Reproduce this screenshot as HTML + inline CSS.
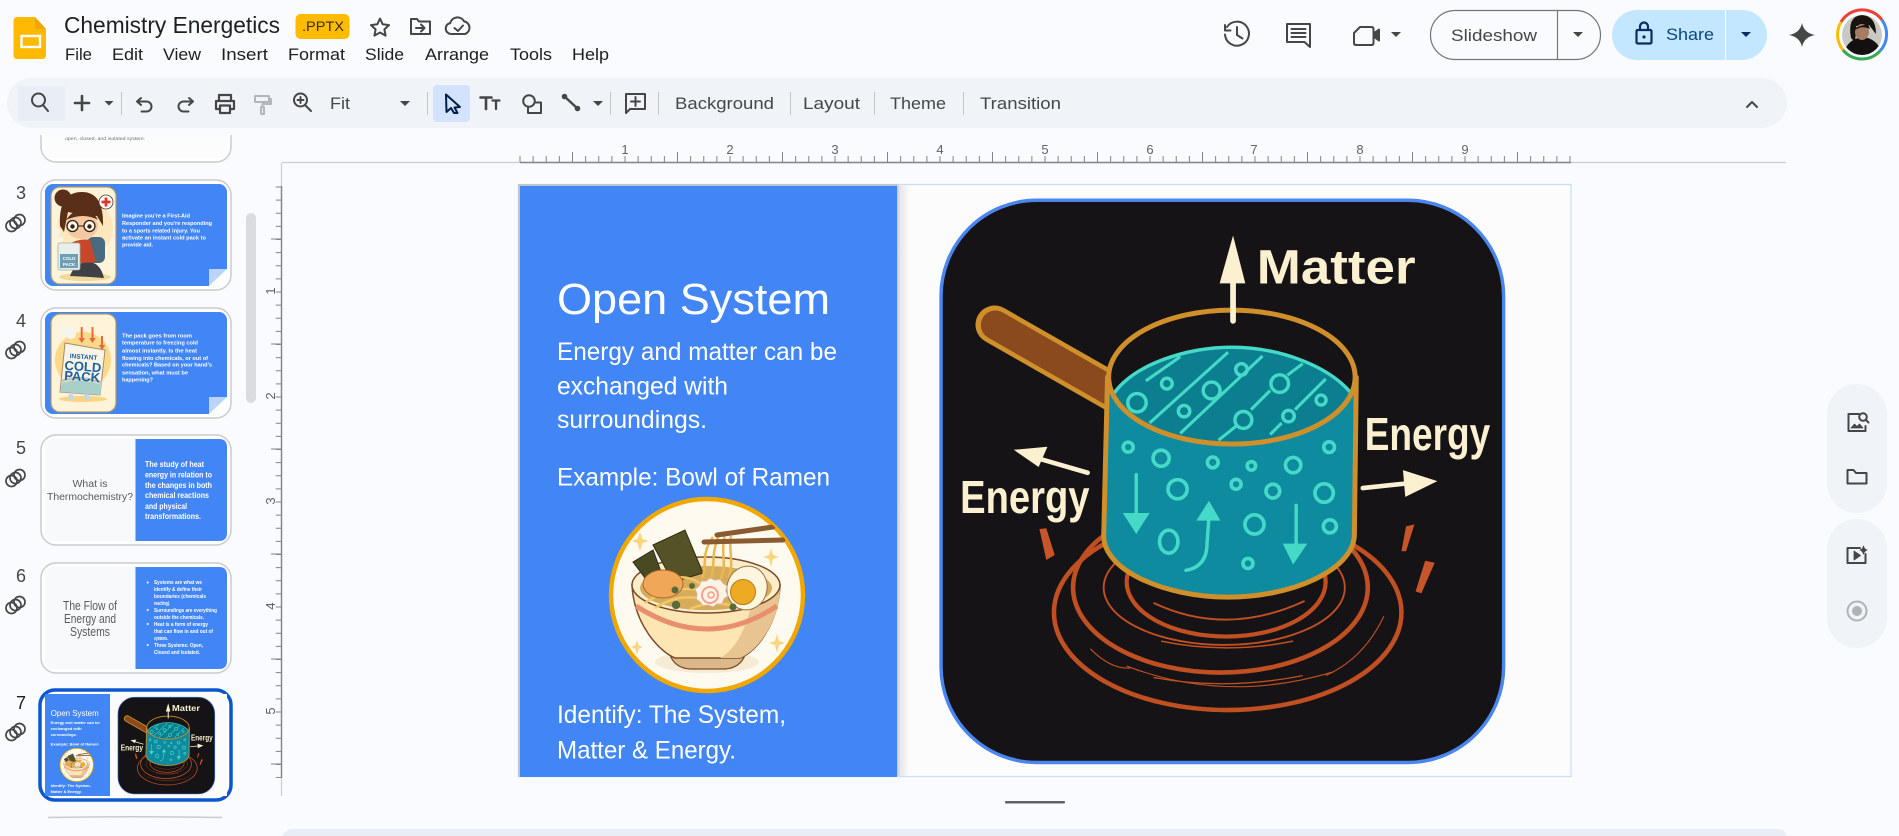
<!DOCTYPE html>
<html lang="en"><head><meta charset="utf-8"><title>Chemistry Energetics</title>
<style>
html,body{margin:0;padding:0;background:#f9fbfe;width:1899px;height:836px;overflow:hidden}
svg{display:block;font-family:"Liberation Sans",Arial,sans-serif}
.ui{fill:#1f1f1f}
.ic{fill:none;stroke:#444746;stroke-width:2;stroke-linecap:round;stroke-linejoin:round}
.car{fill:#444746}
.w{fill:#fff}
.b{fill:#fff;font-weight:700}
.n{fill:#444746;font-size:18px}
.rn{fill:#5f6368;font-size:13px;text-anchor:middle}
.card{fill:#fff;stroke:#c9cbce;stroke-width:1.5}
.bub{fill:none;stroke:#45d9c8}
</style></head>
<body>
<svg width="1899" height="836" viewBox="0 0 1899 836" xmlns="http://www.w3.org/2000/svg">
<defs>
<clipPath id="thumbClip"><rect x="0" y="135" width="240" height="701"/></clipPath>
<clipPath id="potRim"><ellipse cx="815" cy="515" rx="320" ry="173"/></clipPath>
<clipPath id="ramenC"><circle cx="707" cy="595" r="96"/></clipPath>
<clipPath id="img3"><rect x="51" y="187" width="65" height="97" rx="9"/></clipPath>
<clipPath id="img4"><rect x="51" y="314" width="65" height="98" rx="9"/></clipPath>
<clipPath id="avC"><circle cx="1862" cy="35" r="20"/></clipPath>
<linearGradient id="sh" x1="0" x2="1" y1="0" y2="0"><stop offset="0" stop-color="#c3c6ca"/><stop offset=".25" stop-color="#e4e5e7"/><stop offset="1" stop-color="#fbfbfb"/></linearGradient>

<g id="pot">
<rect x="55" y="53" width="1470" height="1469" rx="250" fill="#151315" stroke="#4a86ee" stroke-width="9"/>
<g fill="none" stroke="#c04f22">
<ellipse cx="804" cy="1130" rx="454" ry="255" stroke-width="12"/>
<ellipse cx="785" cy="1065" rx="385" ry="222" stroke-width="12"/>
<ellipse cx="795" cy="1065" rx="315" ry="150" stroke-width="5"/>
<ellipse cx="800" cy="1050" rx="260" ry="143" stroke-width="11"/>
<path d="M610 1105Q800 1195 1005 1100" stroke-width="5"/>
<path d="M630 1205Q800 1240 975 1205" stroke-width="4"/>
<path d="M610 1300Q800 1335 1000 1295" stroke-width="3.500"/>
<path d="M540 1270Q800 1370 1080 1285" stroke-width="3"/>
<path d="M445 1225Q500 1280 550 1275" stroke-width="3"/>
<path d="M1060 1295Q1160 1250 1212 1140" stroke-width="3"/>
</g>
<path d="M312 912L330 910L352 980L330 993Z M1270 905L1292 900L1270 970L1258 970Z M1320 995L1345 1000L1310 1080L1295 1075Z" fill="#c8552a"/>
<line x1="195" y1="378" x2="505" y2="555" stroke="#cf8f2b" stroke-width="100" stroke-linecap="round"/>
<line x1="197" y1="379" x2="505" y2="555" stroke="#8a4a1e" stroke-width="76" stroke-linecap="round"/>
<path d="M490 515L480 930C480 1020 640 1090 805 1090C970 1090 1130 1020 1135 930L1140 515Z" fill="#0f8ba0" stroke="#cf8f2b" stroke-width="13" stroke-linejoin="round"/>
<ellipse cx="815" cy="515" rx="322" ry="175" fill="#151315"/>
<g clip-path="url(#potRim)">
<path d="M505 560C560 480 700 437 815 437C930 437 1060 480 1125 555L1125 700L505 700Z" fill="#0b7f8f" stroke="#45d9c8" stroke-width="9"/>
<path d="M590 525L680 462M600 635L805 450M680 662L895 460M780 680L830 640M960 510L1000 480M865 600L915 550M980 600L1060 520M915 665L945 635" stroke="#45d9c8" stroke-width="8" fill="none"/>
<g class="bub" stroke-width="9"><circle cx="567" cy="582" r="24"/><circle cx="645" cy="532" r="14"/><circle cx="762" cy="550" r="22"/><circle cx="840" cy="495" r="15"/><circle cx="690" cy="604" r="15"/><circle cx="940" cy="532" r="23"/><circle cx="845" cy="627" r="22"/><circle cx="963" cy="617" r="15"/><circle cx="1048" cy="575" r="13"/></g>
</g>
<ellipse cx="815" cy="515" rx="322" ry="175" fill="none" stroke="#cf8f2b" stroke-width="13"/>
<g class="bub" stroke-width="9.500"><circle cx="544" cy="698" r="13"/><circle cx="630" cy="727" r="21"/><circle cx="765" cy="738" r="14"/><circle cx="866" cy="747" r="11"/><circle cx="975" cy="745" r="20"/><circle cx="1069" cy="698" r="14"/><circle cx="673" cy="808" r="25"/><circle cx="826" cy="795" r="13"/><circle cx="922" cy="813" r="18"/><circle cx="1056" cy="818" r="24"/><circle cx="874" cy="900" r="25"/><circle cx="1071" cy="905" r="17"/><circle cx="857" cy="1002" r="13"/><ellipse cx="650" cy="945" rx="24" ry="30"/></g>
<path d="M565 770V880M983 850V960M695 1020Q750 1010 750 950L755 880" fill="none" stroke="#45d9c8" stroke-width="9" stroke-linecap="round"/>
<path d="M530 870L600 870L565 925ZM722 890L785 890L755 838ZM948 950L1012 950L975 1005Z" fill="#45d9c8"/>
<path d="M818 260V368" stroke="#fbf0d0" stroke-width="15" stroke-linecap="round"/>
<path d="M818 145L850 270L783 270Z" fill="#fbf0d0"/>
<path d="M438 765L300 725M1157 805L1280 792" stroke="#fbf0d0" stroke-width="12" stroke-linecap="round"/>
<path d="M245 705L333 697L310 750ZM1262 758L1352 787L1268 828Z" fill="#fbf0d0"/>
</g>

<g id="ramen">
<circle cx="707" cy="595" r="96" fill="#fffaf0" stroke="#f0a800" stroke-width="4.500"/>
<g clip-path="url(#ramenC)">
<ellipse cx="707" cy="662" rx="52" ry="11" fill="#f6ecd6"/>
<path d="M670 655Q675 668 690 669L725 669Q740 668 745 655Z" fill="#dcb98a" stroke="#7a4a28" stroke-width="1.200"/>
<path d="M632 585C634 625 660 652 675 658L740 658C756 652 778 625 780 585Z" fill="#fde6b3" stroke="#7a4a28" stroke-width="1.500"/>
<path d="M750 610C745 630 735 650 720 658L740 658C756 652 778 625 780 590Z" fill="#e8c491"/>
<path d="M636 606Q707 652 777 606" fill="none" stroke="#e98f6d" stroke-width="5"/>
<ellipse cx="706" cy="585" rx="74" ry="28" fill="#fbeccb" stroke="#7a4a28" stroke-width="1.500"/>
<ellipse cx="706" cy="588" rx="66" ry="22" fill="#d6ab5c"/>
<path d="M633 562L653 550L663 577L645 578Z" fill="#4a4a22" stroke="#2e2c12"/>
<path d="M653 545L685 530L703 573L673 582Z" fill="#555225" stroke="#2e2c12"/>
<path d="M645 603Q670 585 700 590M655 608Q680 592 705 600M672 578Q690 575 702 585M690 609Q710 600 735 606" fill="none" stroke="#f2c765" stroke-width="2.500"/>
<ellipse cx="663" cy="584" rx="20" ry="14" fill="#f0a858" stroke="#a86a2c"/>
<path d="M713 537C700 555 708 565 702 578M719 535C710 555 716 570 710 580M725 534C720 555 728 565 720 580M731 536C728 550 735 565 728 578" fill="none" stroke="#e9b84f" stroke-width="2.500"/>
<path d="M717 535L773 527M704 542L783 540" stroke="#8a5a30" stroke-width="5" stroke-linecap="round"/>
<ellipse cx="747" cy="588" rx="20" ry="22" fill="#fff6e2" stroke="#9c7040" stroke-width="1" transform="rotate(15 747 588)"/>
<circle cx="743" cy="592" r="12.500" fill="#eeaa22" stroke="#b87a18"/>
<path d="M710 578l5 2 5-1 3 4 4 3-1 5 2 5-4 3-2 5-5 0-4 3-5-2-5 1-3-4-4-3 1-5-2-5 4-3 2-5 5 0z" fill="#fff2e6" stroke="#d8b088"/>
<circle cx="710" cy="595" r="8" fill="none" stroke="#f3a38c" stroke-width="2"/><circle cx="711" cy="595" r="3" fill="none" stroke="#f3a38c" stroke-width="1.600"/>
<circle cx="675" cy="590" r="3.500" fill="#5a6b3a"/><circle cx="676" cy="605" r="4.200" fill="#5a6b3a"/><circle cx="733" cy="607" r="3.600" fill="#5a6b3a"/><circle cx="692" cy="586" r="3" fill="#5a6b3a"/>
<path d="M640 532l2.500 7 6 2-6 2-2.500 8-2.500-8-6-2 6-2zM771 548l2 7 6 2-6 2-2 8-2-8-6-2 6-2zM777 634l2 7 6 2-6 2-2 8-2-8-6-2 6-2zM637 640l1.500 5 4 2-4 2-1.500 6-1.500-6-4-2 4-2z" fill="#f9d67e"/>
</g>
</g>
</defs>

<rect width="1899" height="836" fill="#f9fbfe"/>

<!-- logo -->
<path d="M18 17H35L46 29V55Q46 59 42 59H17Q13.500 59 13.500 55V21Q13.500 17 18 17Z" fill="#ffba00"/>
<path d="M35 17L46 29H38Q35 29 35 26Z" fill="#f0a500"/>
<rect x="21.500" y="36" width="18.500" height="11" fill="none" stroke="#fff" stroke-width="2.400"/>

<!-- title -->
<text x="64" y="33" font-size="23" class="ui" textLength="216" lengthAdjust="spacingAndGlyphs">Chemistry Energetics</text>
<rect x="295.500" y="14" width="54" height="25" rx="5" fill="#ffbb00"/>
<text x="302" y="31" font-size="14" fill="#3a2d00" textLength="42" lengthAdjust="spacingAndGlyphs">.PPTX</text>
<path class="ic" stroke-width="1.800" d="M380 18.500l2.700 5.800 6.300.8-4.600 4.300 1.200 6.200-5.600-3.100-5.600 3.100 1.200-6.200-4.600-4.300 6.300-.8z"/>
<path class="ic" stroke-width="1.800" d="M411 19h6l2 2.500h11v12.500h-19zM416 28h8M421 24.500l3.500 3.500-3.500 3.500"/>
<path class="ic" stroke-width="1.800" d="M456 34h-5a5.500 5.500 0 0 1-.8-10.900 7.500 7.500 0 0 1 13.900-1.700 6.500 6.500 0 0 1 .9 12.600h-9zM454.500 28l3.500 3 5-5.500"/>

<!-- menu -->
<g font-size="16.500" class="ui">
<text x="65" y="60" textLength="27" lengthAdjust="spacingAndGlyphs">File</text>
<text x="112" y="60" textLength="31" lengthAdjust="spacingAndGlyphs">Edit</text>
<text x="163" y="60" textLength="38" lengthAdjust="spacingAndGlyphs">View</text>
<text x="221" y="60" textLength="47" lengthAdjust="spacingAndGlyphs">Insert</text>
<text x="288" y="60" textLength="57" lengthAdjust="spacingAndGlyphs">Format</text>
<text x="365" y="60" textLength="39" lengthAdjust="spacingAndGlyphs">Slide</text>
<text x="425" y="60" textLength="64" lengthAdjust="spacingAndGlyphs">Arrange</text>
<text x="510" y="60" textLength="42" lengthAdjust="spacingAndGlyphs">Tools</text>
<text x="572" y="60" textLength="37" lengthAdjust="spacingAndGlyphs">Help</text>
</g>

<!-- header right -->
<g class="ic" stroke-width="2.400">
<path d="M1227 27a12 12 0 1 1-2 7.500M1225 25v5.500h5.500M1237 27v8l5.500 3.500"/>
<path d="M1287 24h23v23l-5.500-5h-17.500z"/>
<path d="M1291.500 29h14M1291.500 33h14M1291.500 37h14"/>
<path d="M1360 27h11.500q2 0 2 2v14q0 2-2 2h-15.500q-2 0-2-2v-10z"/>
<path d="M1373.500 33.500l5.500-4v11l-5.500-4z" fill="#444746"/>
</g>
<path class="car" d="M1391 32h10l-5 5zM1573 32h10l-5 5z"/>
<rect x="1430.500" y="10.500" width="170" height="49" rx="24.500" fill="none" stroke="#747775" stroke-width="1.200"/>
<line x1="1557.500" y1="10.500" x2="1557.500" y2="59.500" stroke="#747775" stroke-width="1.200"/>
<text x="1451" y="41" font-size="17" fill="#444746" textLength="86" lengthAdjust="spacingAndGlyphs">Slideshow</text>
<rect x="1612" y="10" width="155" height="50" rx="25" fill="#c2e7ff"/>
<line x1="1725.500" y1="10" x2="1725.500" y2="60" stroke="#f9fbfd" stroke-width="1.200"/>
<path d="M1638 30h12q1.500 0 1.500 1.500v10.500q0 1.500-1.500 1.500h-12q-1.500 0-1.500-1.500v-10.500q0-1.500 1.500-1.500zM1640 30v-3.500a4 4 0 0 1 8 0v3.500" fill="none" stroke="#0b2e62" stroke-width="2.200"/>
<circle cx="1644" cy="37" r="1.600" fill="#0b2e62"/>
<text x="1666" y="40" font-size="17" fill="#0b4582" textLength="48" lengthAdjust="spacingAndGlyphs">Share</text>
<path d="M1741 32h10l-5 5z" fill="#0b2e62"/>
<path d="M1802 23Q1804 33 1815 35Q1804 37 1802 47Q1800 37 1789 35Q1800 33 1802 23Z" fill="#444746"/>

<!-- avatar -->
<g fill="none" stroke-width="3">
<path d="M1841 22A24.500 24.500 0 0 1 1882 20" stroke="#ea4335"/>
<path d="M1882 20A24.500 24.500 0 0 1 1880 51" stroke="#4285f4"/>
<path d="M1880 51A24.500 24.500 0 0 1 1843 50" stroke="#34a853"/>
<path d="M1843 50A24.500 24.500 0 0 1 1841 22" stroke="#fbbc04"/>
</g>
<g clip-path="url(#avC)">
<rect x="1840" y="13" width="44" height="44" fill="#c9c9c4"/>
<path d="M1843 57Q1845 42 1858 38L1868 38Q1880 42 1883 57Z" fill="#141011"/>
<path d="M1851 38Q1847 16 1862 15Q1876 16 1876 34L1869 25Q1860 27 1856 26Q1856 34 1855 42Z" fill="#19130f"/>
<ellipse cx="1862" cy="32" rx="7" ry="8" fill="#a67c65"/>
<path d="M1855 28Q1860 26 1868 24L1870 29Q1862 25 1855 30Z" fill="#19130f"/>
</g>

<!-- toolbar -->
<rect x="7" y="78" width="1780" height="50" rx="25" fill="#f0f4f9"/>
<rect x="18" y="86" width="47" height="35" fill="#e9eef6"/>
<rect x="433" y="85" width="37" height="37" rx="4" fill="#d3e3fd"/>
<g class="ic">
<circle cx="38.500" cy="100" r="6.500"/><path d="M43 105l5 6"/>
<path stroke-width="2.600" d="M82 96v14M75 103h14"/>
<path d="M141 98l-4 3.500 4 3.500M137 101.500h9.500a5 5 0 0 1 0 10h-5"/>
<path d="M189 98l4 3.500-4 3.500M193 101.500h-9.500a5 5 0 0 0 0 10h5"/>
<path stroke-width="2.200" d="M219 101v-6h12v6M219 109h-3v-8h18v8h-3M220 105.500h10v7.500h-10z"/>
<g stroke="#b3b6ba"><path d="M255 96h14v6h-14zM269 99h2v5h-8.500v3"/><path d="M261 107h3v7h-3z"/></g>
<circle cx="300.500" cy="100" r="6.500"/><path d="M305 105l6 6M300.500 97v6M297.500 100h6"/>
<path stroke="#041e49" d="M446 94.500L460 107L454.500 107.500L457.500 113L454 113L451 108L446.500 112Z"/>
<path stroke-width="2.600" d="M480.500 97.500h11M486 97.500v11.500"/><path stroke-width="2.300" d="M492.500 100.500h7M496 100.500v8.500"/>
<circle cx="529" cy="101" r="5.800"/><path d="M536 102.500h5v10.500h-13v-5"/>
<path stroke-width="2.400" d="M565 97l12 11"/><circle cx="564.500" cy="96.500" r="1.800" fill="#444746"/><circle cx="577.500" cy="108.500" r="1.800" fill="#444746"/>
<path d="M626 94h19v15h-15l-4 4zM635.500 97v9M631 101.500h9"/>
<path d="M1747 107l5-5 5 5"/>
</g>
<path class="car" d="M104.500 101h9l-4.500 4.500zM400 101h10l-5 5zM593 101h10l-5 5z"/>
<g stroke="#c4c7c5" stroke-width="1">
<line x1="121.500" y1="92" x2="121.500" y2="115"/><line x1="427.500" y1="92" x2="427.500" y2="115"/><line x1="610.500" y1="92" x2="610.500" y2="115"/><line x1="658.500" y1="92" x2="658.500" y2="115"/><line x1="790.500" y1="92" x2="790.500" y2="115"/><line x1="874.500" y1="92" x2="874.500" y2="115"/><line x1="963.500" y1="92" x2="963.500" y2="115"/>
</g>
<g font-size="17" fill="#444746">
<text x="330" y="109" textLength="20" lengthAdjust="spacingAndGlyphs">Fit</text>
<text x="675" y="109" textLength="99" lengthAdjust="spacingAndGlyphs">Background</text>
<text x="803" y="109" textLength="57" lengthAdjust="spacingAndGlyphs">Layout</text>
<text x="890" y="109" textLength="56" lengthAdjust="spacingAndGlyphs">Theme</text>
<text x="980" y="109" textLength="81" lengthAdjust="spacingAndGlyphs">Transition</text>
</g>

<!-- rulers -->
<line x1="282" y1="162.500" x2="1786" y2="162.500" stroke="#c9cccf" stroke-width="1.200"/>
<line x1="520" y1="162.500" x2="1571" y2="162.500" stroke="#80868b" stroke-width="1.400"/>
<line x1="519.500" y1="159" x2="1571" y2="159" stroke="#80868b" stroke-width="6" stroke-dasharray="1 12.125"/>
<line x1="572" y1="157" x2="1571" y2="157" stroke="#80868b" stroke-width="10" stroke-dasharray="1 104"/>
<g class="rn">
<text x="625" y="154">1</text><text x="730" y="154">2</text><text x="835" y="154">3</text><text x="940" y="154">4</text><text x="1045" y="154">5</text><text x="1150" y="154">6</text><text x="1254" y="154">7</text><text x="1360" y="154">8</text><text x="1465" y="154">9</text>
</g>
<line x1="281.500" y1="163" x2="281.500" y2="796" stroke="#c9cccf" stroke-width="1.200"/>
<line x1="281.500" y1="186" x2="281.500" y2="778" stroke="#80868b" stroke-width="1.400"/>
<line x1="278.500" y1="186.500" x2="278.500" y2="778" stroke="#80868b" stroke-width="5.500" stroke-dasharray="1 12.125"/>
<line x1="276" y1="238.500" x2="276" y2="778" stroke="#80868b" stroke-width="10" stroke-dasharray="1 104"/>
<g class="rn">
<text transform="translate(275 291) rotate(-90)">1</text><text transform="translate(275 396) rotate(-90)">2</text><text transform="translate(275 501) rotate(-90)">3</text><text transform="translate(275 606) rotate(-90)">4</text><text transform="translate(275 711) rotate(-90)">5</text>
</g>

<!-- sidebar scrollbar -->
<rect x="246" y="213" width="10" height="190" rx="5" fill="#dadce0"/>

<!-- thumbnails -->
<g clip-path="url(#thumbClip)">
<rect x="41" y="100" width="190" height="62" rx="15" class="card"/>
<rect x="45" y="100" width="182" height="58" rx="8" fill="#fcfcfc"/>
<text x="65" y="140" font-size="4.300" fill="#6d6d6d" textLength="80" lengthAdjust="spacingAndGlyphs">open, closed, and isolated system.</text>
</g>

<!-- 3 -->
<text x="16" y="199" class="n">3</text>
<rect x="41" y="180" width="190" height="110" rx="15" class="card"/>
<rect x="45" y="184" width="182" height="102" rx="8" fill="#4285f4"/>
<path d="M209 286V269H227V276L217 286Z" fill="#bcd4fb"/><path d="M227 269V278Q227 286 219 286H209Z" fill="#fff"/>
<rect x="51" y="187" width="65" height="97" rx="9" fill="#fff3d9" stroke="#b39a60" stroke-width="1.200"/>
<g clip-path="url(#img3)">
<circle cx="85" cy="228" r="28" fill="#fde8bd"/>
<ellipse cx="85" cy="277" rx="26" ry="4" fill="#f0d89a"/>
<path d="M70 276Q75 262 88 262Q100 262 104 278L90 277Z" fill="#3f4045"/>
<rect x="87" y="237" width="18" height="26" rx="6" fill="#4a6a80"/>
<path d="M68 245Q78 238 90 240L96 262L70 264Z" fill="#c7472a"/>
<circle cx="63" cy="198" r="8.500" fill="#5a2f1a"/>
<path d="M60 226Q58 192 82 192Q104 192 103 226L97 216Q80 215 68 212L64 232Z" fill="#5a2f1a"/>
<ellipse cx="82" cy="226" rx="16" ry="13" fill="#f6c8a2"/>
<path d="M66 220Q74 208 86 210Q94 212 98 220Q84 212 66 220Z" fill="#5a2f1a"/>
<circle cx="72.500" cy="226" r="5.500" fill="#fff7e6" stroke="#2d2019" stroke-width="1.300"/><circle cx="89.500" cy="226" r="5.500" fill="#fff7e6" stroke="#2d2019" stroke-width="1.300"/>
<path d="M78 226h6" stroke="#2d2019" stroke-width="1"/>
<circle cx="72.500" cy="226.500" r="2.200" fill="#3a2015"/><circle cx="89.500" cy="226.500" r="2.200" fill="#3a2015"/>
<rect x="58" y="243" width="22" height="27" rx="2" fill="#e8efe8" stroke="#9eb0b0" stroke-width=".8"/>
<rect x="60" y="254" width="18" height="14" fill="#6f9db4"/>
<text x="69" y="260" font-size="4.500" class="b" text-anchor="middle">COLD</text>
<text x="69" y="266" font-size="4.500" class="b" text-anchor="middle">PACK</text>
<circle cx="56.500" cy="232" r="3.800" fill="#f9f4e6"/><circle cx="61" cy="239" r="2.500" fill="#f9f4e6"/>
<circle cx="106" cy="202" r="7" fill="#fff" stroke="#4a3a2a" stroke-width=".8"/>
<path d="M106 197.500v9M101.500 202h9" stroke="#d93a26" stroke-width="2.800"/>
</g>
<g class="b" font-size="5.800">
<text x="122" y="217.500" textLength="68" lengthAdjust="spacingAndGlyphs">Imagine you're a First-Aid</text>
<text x="122" y="225" textLength="90" lengthAdjust="spacingAndGlyphs">Responder and you're responding</text>
<text x="122" y="232.300" textLength="78" lengthAdjust="spacingAndGlyphs">to a sports related injury. You</text>
<text x="122" y="239.700" textLength="84" lengthAdjust="spacingAndGlyphs">activate an instant cold pack to</text>
<text x="122" y="246.700" textLength="31" lengthAdjust="spacingAndGlyphs">provide aid.</text>
</g>
<g fill="none" stroke="#444746" stroke-width="1.700"><circle cx="11.500" cy="226" r="5.500"/><circle cx="15.500" cy="223" r="5.500"/><circle cx="19.500" cy="220" r="5.500"/></g>

<!-- 4 -->
<text x="16" y="327" class="n">4</text>
<rect x="41" y="308" width="190" height="110" rx="15" class="card"/>
<rect x="45" y="312" width="182" height="102" rx="8" fill="#4285f4"/>
<path d="M209 414V397H227V404L217 414Z" fill="#bcd4fb"/><path d="M227 397V406Q227 414 219 414H209Z" fill="#fff"/>
<rect x="51" y="314" width="65" height="98" rx="9" fill="#fff3d9" stroke="#b39a60" stroke-width="1.200"/>
<g clip-path="url(#img4)">
<circle cx="83" cy="360" r="28" fill="#fcd98a"/>
<ellipse cx="83" cy="399" rx="24" ry="3" fill="#f8d483"/>
<circle cx="66" cy="331" r="6" fill="#f5f5ec"/><circle cx="71" cy="334" r="5" fill="#f5f5ec"/>
<path d="M65 343L105 350L100 395L60 392Z" fill="#f8f4e6" stroke="#a68a6a" stroke-width="1"/>
<path d="M62 383Q80 377 102 385L100 395L60 392Z" fill="#a8d0c8"/>
<path d="M62 381Q80 375 102 383" stroke="#c5c5b8" stroke-width="3" fill="none"/>
<g fill="#1e5f9e" font-weight="700" text-anchor="middle" transform="rotate(4 83 365)">
<text x="83" y="359" font-size="6.500">INSTANT</text>
<text x="83" y="371" font-size="13">COLD</text>
<text x="83" y="381" font-size="13">PACK</text>
</g>
<path d="M81.700 327v13M92.500 327v13M102 336v11" stroke="#e8693a" stroke-width="2"/>
<path d="M78.500 338h6.500l-3.250 5zM89.200 338h6.500l-3.250 5zM98.800 345h6.500l-3.250 5z" fill="#e8693a"/>
<circle cx="71" cy="397" r="3" fill="#c4d8e4"/><circle cx="87" cy="397" r="3" fill="#c4d8e4"/>
</g>
<g class="b" font-size="5.800">
<text x="122" y="337.300" textLength="70" lengthAdjust="spacingAndGlyphs">The pack goes from room</text>
<text x="122" y="344.700" textLength="76" lengthAdjust="spacingAndGlyphs">temperature to freezing cold</text>
<text x="122" y="352.700" textLength="75" lengthAdjust="spacingAndGlyphs">almost instantly. Is the heat</text>
<text x="122" y="360" textLength="86" lengthAdjust="spacingAndGlyphs">flowing into chemicals, or out of</text>
<text x="122" y="366.700" textLength="90" lengthAdjust="spacingAndGlyphs">chemicals? Based on your hand's</text>
<text x="122" y="374.300" textLength="66" lengthAdjust="spacingAndGlyphs">sensation, what must be</text>
<text x="122" y="381.700" textLength="31" lengthAdjust="spacingAndGlyphs">happening?</text>
</g>
<g fill="none" stroke="#444746" stroke-width="1.700"><circle cx="11.500" cy="353" r="5.500"/><circle cx="15.500" cy="350" r="5.500"/><circle cx="19.500" cy="347" r="5.500"/></g>

<!-- 5 -->
<text x="16" y="454" class="n">5</text>
<rect x="41" y="435" width="190" height="110" rx="15" class="card"/>
<rect x="45" y="439" width="182" height="102" rx="8" fill="#f8f9fa"/>
<path d="M135.500 439H219Q227 439 227 447V533Q227 541 219 541H135.500Z" fill="#4285f4"/>
<g fill="#5a5a5a" font-size="10.500" text-anchor="middle">
<text x="90" y="487">What is</text>
<text x="90" y="500" textLength="86" lengthAdjust="spacingAndGlyphs">Thermochemistry?</text>
</g>
<g class="b" font-size="8">
<text x="145" y="467" textLength="59" lengthAdjust="spacingAndGlyphs">The study of heat</text>
<text x="145" y="477.500" textLength="67" lengthAdjust="spacingAndGlyphs">energy in relation to</text>
<text x="145" y="488" textLength="67" lengthAdjust="spacingAndGlyphs">the changes in both</text>
<text x="145" y="498" textLength="64" lengthAdjust="spacingAndGlyphs">chemical reactions</text>
<text x="145" y="509" textLength="42" lengthAdjust="spacingAndGlyphs">and physical</text>
<text x="145" y="519" textLength="56" lengthAdjust="spacingAndGlyphs">transformations.</text>
</g>
<g fill="none" stroke="#444746" stroke-width="1.700"><circle cx="11.500" cy="481" r="5.500"/><circle cx="15.500" cy="478" r="5.500"/><circle cx="19.500" cy="475" r="5.500"/></g>

<!-- 6 -->
<text x="16" y="582" class="n">6</text>
<rect x="41" y="563" width="190" height="110" rx="15" class="card"/>
<rect x="45" y="567" width="182" height="102" rx="8" fill="#f8f9fa"/>
<path d="M135.500 567H219Q227 567 227 575V661Q227 669 219 669H135.500Z" fill="#4285f4"/>
<g fill="#5a5a5a" font-size="12.500" text-anchor="middle">
<text x="90" y="610" textLength="54" lengthAdjust="spacingAndGlyphs">The Flow of</text>
<text x="90" y="623" textLength="52" lengthAdjust="spacingAndGlyphs">Energy and</text>
<text x="90" y="636" textLength="40" lengthAdjust="spacingAndGlyphs">Systems</text>
</g>
<g class="w"><circle cx="147.700" cy="582.500" r="1"/><circle cx="147.700" cy="610" r="1"/><circle cx="147.700" cy="624" r="1"/><circle cx="147.700" cy="645" r="1"/></g>
<g class="b" font-size="5.300">
<text x="154" y="584" textLength="48" lengthAdjust="spacingAndGlyphs">Systems are what we</text>
<text x="154" y="591" textLength="48" lengthAdjust="spacingAndGlyphs">identify &amp; define their</text>
<text x="154" y="598" textLength="52" lengthAdjust="spacingAndGlyphs">boundaries (chemicals</text>
<text x="154" y="605" textLength="16" lengthAdjust="spacingAndGlyphs">reacting).</text>
<text x="154" y="612" textLength="63" lengthAdjust="spacingAndGlyphs">Surroundings are everything</text>
<text x="154" y="619" textLength="50" lengthAdjust="spacingAndGlyphs">outside the chemicals.</text>
<text x="154" y="626" textLength="54" lengthAdjust="spacingAndGlyphs">Heat is a form of energy</text>
<text x="154" y="633" textLength="59" lengthAdjust="spacingAndGlyphs">that can flow in and out of</text>
<text x="154" y="640" textLength="14" lengthAdjust="spacingAndGlyphs">systems.</text>
<text x="154" y="647" textLength="49" lengthAdjust="spacingAndGlyphs">Three Systems: Open,</text>
<text x="154" y="654" textLength="46" lengthAdjust="spacingAndGlyphs">Closed and Isolated.</text>
</g>
<g fill="none" stroke="#444746" stroke-width="1.700"><circle cx="11.500" cy="608" r="5.500"/><circle cx="15.500" cy="605" r="5.500"/><circle cx="19.500" cy="602" r="5.500"/></g>

<!-- 7 -->
<text x="16" y="709" class="n" style="fill:#1f1f1f">7</text>
<rect x="40" y="690" width="191" height="110" rx="15" fill="#fff" stroke="#0b57d0" stroke-width="3.500"/>
<rect x="45" y="694" width="182" height="102" fill="#fbfbfb"/>
<rect x="45" y="694" width="65" height="102" fill="#4285f4"/>
<text x="50.700" y="716" font-size="8.700" class="w" textLength="48" lengthAdjust="spacingAndGlyphs">Open System</text>
<g class="b" font-size="3.800">
<text x="50.700" y="724" textLength="49" lengthAdjust="spacingAndGlyphs">Energy and matter can be</text>
<text x="50.700" y="730" textLength="31" lengthAdjust="spacingAndGlyphs">exchanged with</text>
<text x="50.700" y="736" textLength="26" lengthAdjust="spacingAndGlyphs">surroundings.</text>
<text x="50.700" y="745.500" textLength="48" lengthAdjust="spacingAndGlyphs">Example: Bowl of Ramen</text>
<text x="50.700" y="787" textLength="40" lengthAdjust="spacingAndGlyphs">Identify: The System,</text>
<text x="50.700" y="793" textLength="31" lengthAdjust="spacingAndGlyphs">Matter &amp; Energy.</text>
</g>
<use href="#ramen" transform="translate(-45.600 662) scale(.173)"/>
<use href="#pot" transform="translate(114.300 693.700) scale(.0659)"/>
<g fill="#fbf0d0" font-weight="700" font-size="8">
<text x="172" y="711" textLength="28" lengthAdjust="spacingAndGlyphs">Matter</text>
<text x="191" y="740.700" textLength="21.700" lengthAdjust="spacingAndGlyphs">Energy</text>
<text x="120.700" y="750.700" textLength="22.300" lengthAdjust="spacingAndGlyphs">Energy</text>
</g>
<g fill="none" stroke="#444746" stroke-width="1.700"><circle cx="11.500" cy="735" r="5.500"/><circle cx="15.500" cy="732" r="5.500"/><circle cx="19.500" cy="729" r="5.500"/></g>
<path d="M48 817.500Q135 816 222 817.500" fill="none" stroke="#c9cbce" stroke-width="1.400"/>

<!-- main slide -->
<rect x="518.500" y="184.500" width="1052.500" height="592" fill="#fcfcfc" stroke="#c9dcfb" stroke-width="1.200"/>
<rect x="897" y="185.500" width="12" height="590.500" fill="url(#sh)"/>
<rect x="518.500" y="184" width="379" height="2" fill="#bcc4cc"/>
<rect x="518" y="184" width="2" height="593" fill="#bcc4cc"/>
<rect x="520" y="186" width="377" height="591" fill="#4285f4"/>
<g class="w">
<text x="557" y="314" font-size="44" textLength="273" lengthAdjust="spacingAndGlyphs">Open System</text>
<g font-size="25">
<text x="557" y="360" textLength="280" lengthAdjust="spacingAndGlyphs">Energy and matter can be</text>
<text x="557" y="394.500" textLength="171" lengthAdjust="spacingAndGlyphs">exchanged with</text>
<text x="557" y="428" textLength="150" lengthAdjust="spacingAndGlyphs">surroundings.</text>
<text x="557" y="485.500" textLength="273" lengthAdjust="spacingAndGlyphs">Example: Bowl of Ramen</text>
<text x="557" y="723" textLength="229" lengthAdjust="spacingAndGlyphs">Identify: The System,</text>
<text x="557" y="758.500" textLength="179" lengthAdjust="spacingAndGlyphs">Matter &amp; Energy.</text>
</g>
</g>
<use href="#ramen"/>
<use href="#pot" transform="translate(920 180) scale(.3827)"/>
<g fill="#fbf0d0" font-weight="700" transform="translate(920 180) scale(.3827)">
<text x="880" y="270" font-size="125" textLength="415" lengthAdjust="spacingAndGlyphs">Matter</text>
<text x="1162" y="705" font-size="120" textLength="328" lengthAdjust="spacingAndGlyphs">Energy</text>
<text x="105" y="870" font-size="120" textLength="338" lengthAdjust="spacingAndGlyphs">Energy</text>
</g>

<!-- bottom -->
<rect x="1005" y="801" width="60" height="2.500" rx="1" fill="#5f6368"/>
<path d="M282 836V841Q282 829 294 829H1777Q1787 829 1787 839V836Z" fill="#e9eef6"/>

<!-- right side panel -->
<rect x="1827" y="384" width="60" height="129" rx="30" fill="#f0f4f9"/>
<rect x="1827" y="519" width="60" height="129" rx="30" fill="#f0f4f9"/>
<g class="ic" stroke-width="1.800">
<path d="M1859 414h-10.500v17h17v-5"/><circle cx="1863" cy="417" r="3.800"/><path d="M1866 420l2.500 2.500"/>
<path d="M1851 428l3.500-4 2.500 2.500 2.500-2.500 3.500 4z" fill="#444746" stroke-width=".8"/>
<path d="M1847.500 470h6l2.500 3h10.500v10.500h-19z"/>
<path d="M1860 548h-12.500v15h18v-9"/>
<path d="M1854 551l6.500 4.500-6.500 4.500z" fill="#444746" stroke-width=".8"/>
<path d="M1863.500 546q.8 3.500 3.500 4 -2.700.8-3.500 4.200 -.8-3.400-3.500-4.200 2.700-.5 3.500-4z" fill="#444746" stroke-width=".8"/>
</g>
<circle cx="1857" cy="611" r="9.500" fill="none" stroke="#b0b2b5" stroke-width="2"/>
<circle cx="1857" cy="611" r="5" fill="#b0b2b5"/>
</svg>
</body></html>
